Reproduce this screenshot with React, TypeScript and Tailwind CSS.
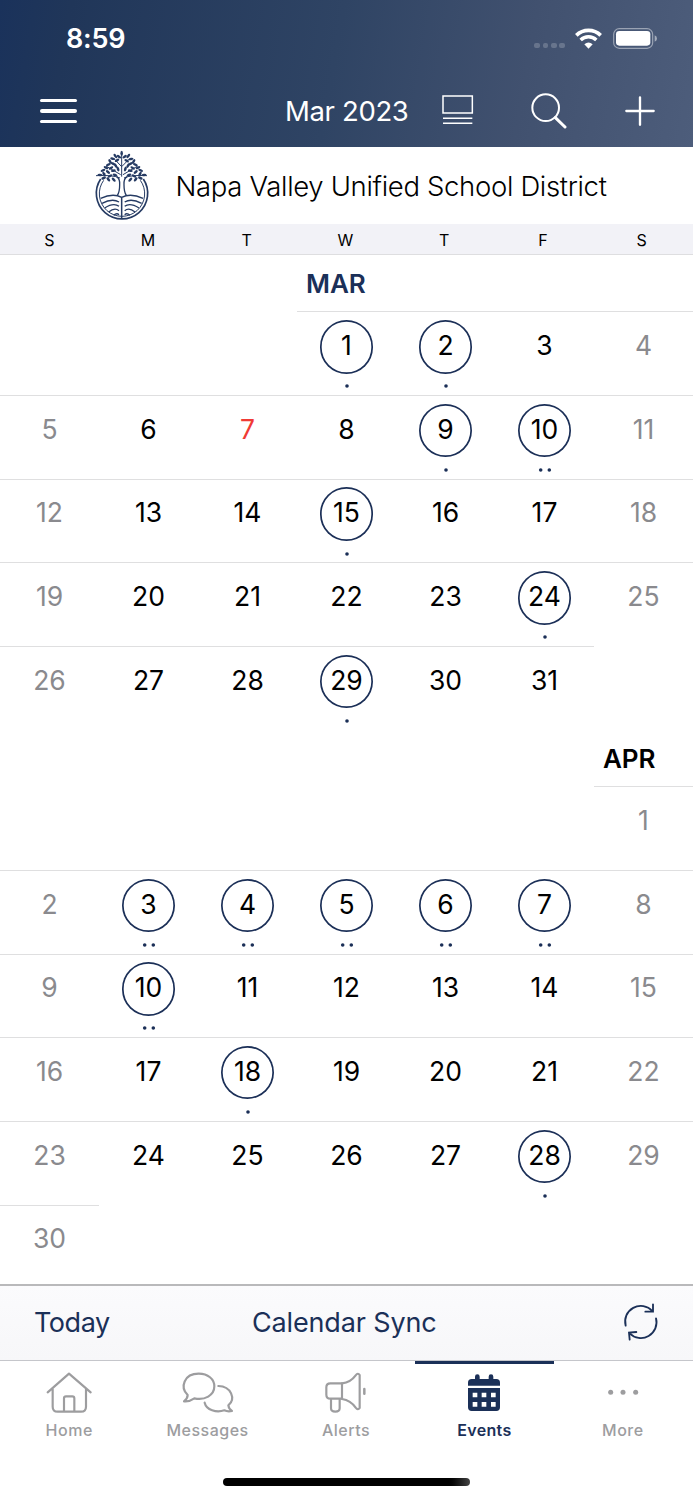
import type { ReactNode } from "react";
import { clsx } from "clsx";

const WEEKDAYS = ["S", "M", "T", "W", "T", "F", "S"];

interface Month {
  label: string;
  current?: boolean;
  startCol: number;
  days: number;
  today?: number;
  events: Record<number, number>;
}

const MONTHS: Month[] = [
  {
    label: "MAR",
    current: true,
    startCol: 3,
    days: 31,
    today: 7,
    events: { 1: 1, 2: 1, 9: 1, 10: 2, 15: 1, 24: 1, 29: 1 },
  },
  {
    label: "APR",
    startCol: 6,
    days: 30,
    events: { 3: 2, 4: 2, 5: 2, 6: 2, 7: 2, 10: 2, 18: 1, 28: 1 },
  },
];

function getWeeks({ startCol, days }: Month) {
  const rows = Math.ceil((startCol + days) / 7);
  return Array.from({ length: rows }, (_, r) =>
    Array.from({ length: 7 }, (_, c) => {
      const day = r * 7 + c - startCol + 1;
      return day >= 1 && day <= days ? day : null;
    })
  );
}

function StatusBar() {
  return (
    <div className="flex h-[75px] items-center pt-[2px] pl-[66px] pr-[35px]">
      <span className="text-[27px] leading-none font-semibold tracking-[-0.2px]">8:59</span>
      <div className="ml-auto flex items-center">
        <div className="mt-[14px] mr-[10px] flex gap-[2.8px]">
          {[0, 1, 2, 3].map((i) => (
            <span key={i} className="h-[5.6px] w-[5.6px] rounded-[2px] bg-white/20" />
          ))}
        </div>
        <svg className="mr-[11px] h-[21px] w-[27px]" viewBox="0 0 81 63" fill="none" stroke="white">
          <path d="M4 22 A52 52 0 0 1 77 22" strokeWidth="11" />
          <path d="M17 36 A34 34 0 0 1 64 36" strokeWidth="10.5" />
          <path d="M40.5 62 L28 49 Q40.5 38 53 49 Z" fill="white" stroke="none" />
        </svg>
        <svg className="h-[21px] w-[45px]" viewBox="0 0 135 63">
          <rect x="2" y="2" width="117" height="59" rx="17" fill="none" stroke="white" strokeOpacity="0.45" strokeWidth="3.5" />
          <rect x="9" y="9" width="103" height="44" rx="10" fill="white" />
          <path d="M125 22 Q132 25 132 32 Q132 38 125 41 Z" fill="white" fillOpacity="0.5" />
        </svg>
      </div>
    </div>
  );
}

function NavBar() {
  return (
    <div className="flex h-[72px] items-center pl-10">
      <div className="flex w-[37px] flex-col gap-[6.8px]">
        <span className="h-[3.6px] rounded-full bg-white" />
        <span className="h-[3.6px] rounded-full bg-white" />
        <span className="h-[3.6px] rounded-full bg-white" />
      </div>
      <span className="ml-[208px] w-[123px] pt-[2px] text-[27.5px] leading-none tracking-[-0.35px] whitespace-nowrap">Mar 2023</span>
      <svg className="mt-[-2px] ml-[33px] h-[32px] w-[33px]" viewBox="0 0 99 96" fill="none" stroke="white" strokeWidth="4.5">
        <path d="M6 6 H94 V57 H6 Z M6 73 H94 M6 88 H94" />
      </svg>
      <svg className="ml-[57px] h-[36px] w-[36px]" viewBox="0 0 108 108" fill="none" stroke="white" strokeLinecap="round">
        <circle cx="44" cy="44" r="40" strokeWidth="6" />
        <path d="M73 74 L102 102" strokeWidth="9" />
      </svg>
      <svg className="ml-[58px] h-[30px] w-[30px]" viewBox="0 0 90 90" fill="none" stroke="white" strokeWidth="7" strokeLinecap="round">
        <path d="M45 4 V86 M4 45 H86" />
      </svg>
    </div>
  );
}

const LEAVES = [
  [127, 26, 90], [119, 36, 35], [136, 36, -35], [108, 34, 50], [147, 34, -50],
  [100, 42, 10], [155, 43, -10], [113, 47, -30], [142, 48, 30], [92, 50, 60],
  [163, 50, -60], [87, 60, -20], [168, 60, 20], [101, 57, 30], [154, 57, -30],
  [80, 69, 25], [176, 69, -25], [95, 70, -35], [160, 70, 35], [109, 63, 60],
  [146, 63, -60], [71, 77, -20], [184, 77, 20], [86, 82, 40], [169, 82, -40],
  [102, 78, -10], [153, 78, 10], [62, 91, 5], [194, 91, -5], [74, 88, 60],
  [182, 88, -60], [73, 100, -25], [183, 100, 25], [92, 94, -30], [164, 94, 30],
  [87, 104, 50], [169, 104, -50], [107, 91, 20], [149, 91, -20], [103, 105, 45],
  [153, 105, -45], [116, 73, 70], [138, 73, -70],
];

function DistrictLogo() {
  return (
    <svg className="h-[72px] w-[56px] shrink-0 text-[#263b63]" viewBox="44 16 168 216" fill="none" stroke="currentColor">
      <path d="M64 103 A77 77 0 1 0 192 103" strokeWidth="5" />
      <path d="M73 107 A68 68 0 1 0 183 107" strokeWidth="3" />
      <path d="M127 24 V96 M124 90 L80 64 M131 90 L175 64 M122 100 Q100 90 50 93 M134 100 Q155 90 203 93 M127 66 L104 42 M127 66 L151 42" strokeWidth="3" />
      <path d="M112 96 Q122 102 121 120 Q121 142 114 152 M143 96 Q133 102 134 120 Q134 142 141 152" strokeWidth="4" />
      <path d="M64 161 Q101 144 127 158 Q154 144 191 161 M127 158 V220" strokeWidth="4.5" />
      <path d="M68 176 Q99 160 119 172 M76 190 Q103 173 119 185 M88 202 Q106 187 119 198 M103 212 Q112 204 119 210 M187 176 Q156 160 136 172 M179 190 Q152 173 136 185 M167 202 Q149 187 136 198 M152 212 Q143 204 136 210" strokeWidth="4" />
      {LEAVES.map(([x, y, angle]) => (
        <ellipse
          key={`${x}-${y}`}
          cx={x}
          cy={y}
          rx="7.5"
          ry="3.8"
          transform={`rotate(${angle} ${x} ${y})`}
          fill="currentColor"
          stroke="none"
        />
      ))}
    </svg>
  );
}

function EventDots({ count }: { count: number }) {
  return (
    <svg className="mt-[10.6px] h-[4px] w-[14px] text-[#1b2f57]" viewBox="0 0 14 4" fill="currentColor">
      {count === 1 && <circle cx="7" cy="2" r="1.8" />}
      {count === 2 && (
        <>
          <circle cx="2.7" cy="2" r="1.8" />
          <circle cx="11.3" cy="2" r="1.8" />
        </>
      )}
    </svg>
  );
}

interface DayCellProps {
  day: number | null;
  col: number;
  today: boolean;
  events: number;
}

function DayCell({ day, col, today, events }: DayCellProps) {
  if (day === null) return <div />;
  const weekend = col === 0 || col === 6;
  return (
    <div className="flex flex-col items-center border-t border-[#dfdfe0] pt-[7.6px]">
      <div
        className={clsx(
          "flex h-[53.6px] w-[53.6px] items-center justify-center rounded-full pb-[3px] text-[26.5px] leading-none",
          events > 0 && "shadow-[inset_0_0_0_1.7px_#1b2f57]",
          today ? "text-[#f03a35]" : weekend ? "text-[#8a8a8e]" : "text-black"
        )}
      >
        {day}
      </div>
      <EventDots count={events} />
    </div>
  );
}

function MonthSection({ month }: { month: Month }) {
  return (
    <section>
      <div className="grid h-[56.4px] grid-cols-7 items-center pt-[2px]">
        {WEEKDAYS.map((_, col) => (
          <span
            key={col}
            className={clsx(
              "pl-[9px] text-[26px] leading-none font-semibold tracking-[-0.1px]",
              month.current ? "text-[#1b3058]" : "text-black"
            )}
          >
            {col === month.startCol ? month.label : ""}
          </span>
        ))}
      </div>
      {getWeeks(month).map((week, r) => (
        <div key={r} className="grid h-[83.7px] grid-cols-7">
          {week.map((day, col) => (
            <DayCell
              key={col}
              day={day}
              col={col}
              today={day !== null && day === month.today}
              events={day !== null ? month.events[day] ?? 0 : 0}
            />
          ))}
        </div>
      ))}
    </section>
  );
}

function Toolbar() {
  return (
    <div className="flex h-[77px] shrink-0 items-center border-t-2 border-b border-t-[#b9b9bb] border-b-[#c5c6cb] bg-linear-to-b from-[#fbfbfd] to-[#f7f7f9] pl-[34px] text-[27px] leading-none text-[#1b3058]">
      <span className="w-[218px] pb-px tracking-[-0.45px]">Today</span>
      <span className="w-[190px] pb-px tracking-[-0.15px] whitespace-nowrap">Calendar Sync</span>
      <svg className="mt-[-2px] ml-[181px] h-[38px] w-[36px]" viewBox="840 338 108 114" fill="none" stroke="currentColor" strokeWidth="5.5" strokeLinecap="round">
        <path d="M848 406 A47 47 0 0 1 928 362 M930 342 V364 H907" />
        <path d="M939 384 A47 47 0 0 1 860 429 M860 448 L858 427 L880 425" />
      </svg>
    </div>
  );
}

interface TabProps {
  label: string;
  active?: boolean;
  children: ReactNode;
}

function Tab({ label, active, children }: TabProps) {
  return (
    <div
      className={clsx(
        "flex flex-1 flex-col items-center border-t-[3px] pt-[6px]",
        active ? "border-[#1b3058] text-[#1b3058]" : "border-transparent text-[#9d9d9f]"
      )}
    >
      {children}
      <span className={clsx("mt-[6px] text-[16px] leading-[18px]", active ? "font-semibold tracking-[0.3px]" : "font-medium tracking-[0.5px]")}>
        {label}
      </span>
    </div>
  );
}

function TabBar() {
  return (
    <nav className="flex h-[112px] shrink-0 bg-white pr-px">
      <Tab label="Home">
        <svg className="h-[45px] w-[48px]" viewBox="135 540 144 135" fill="none" stroke="currentColor" strokeWidth="6.5" strokeLinecap="round" strokeLinejoin="round">
          <path d="M143 607 L207 551 L272 607 M158 598 V650 Q158 665 173 665 H243 Q258 665 258 650 V598 M192 664 V625 Q192 619 198 619 H217 Q223 619 223 625 V664" />
        </svg>
      </Tab>
      <Tab label="Messages">
        <svg className="h-[45px] w-[56px]" viewBox="541 540 168 135" fill="none" stroke="currentColor" strokeWidth="6.5" strokeLinecap="round" strokeLinejoin="round">
          <path d="M564 615 C540 592 553 551 597 551 C625 551 644 567 644 589 C644 616 615 632 584 625 Q568 636 553 634 Q564 625 564 615 Z" />
          <path d="M656 588 C695 589 709 627 686 646 Q688 658 697 663 Q684 666 674 661 C650 669 620 660 615 638" />
        </svg>
      </Tab>
      <Tab label="Alerts">
        <svg className="h-[45px] w-[48px]" viewBox="966 540 144 135" fill="none" stroke="currentColor" strokeWidth="6.5" strokeLinecap="round" strokeLinejoin="round">
          <path d="M1026 580 H991 Q979 580 979 592 V614 Q979 626 991 626 H1026 Z M993 627 V655 Q993 665 1006 665 Q1019 665 1019 655 V627" />
          <path d="M1026 580 Q1052 577 1067 556 Q1074 547 1079 555 V654 Q1074 662 1067 653 Q1052 631 1026 627" />
          <path d="M1093 597 V611" strokeWidth="7.5" />
        </svg>
      </Tab>
      <Tab label="Events" active>
        <svg className="h-[45px] w-[48px]" viewBox="351 540 144 135" fill="currentColor">
          <path d="M375 587 V578 Q375 567 386 567 H396 V560 Q396 553 403 553 Q410 553 410 560 V567 H437 V560 Q437 553 444 553 Q451 553 451 560 V567 H460 Q471 567 471 578 V587 Z" />
          <path fillRule="evenodd" d="M375 594 H471 V652 Q471 663 460 663 H386 Q375 663 375 652 Z M389 608 V622 H403 V608 Z M416 608 V622 H430 V608 Z M444 608 V622 H458 V608 Z M389 636 V650 H403 V636 Z M416 636 V650 H430 V636 Z M444 636 V650 H458 V636 Z" />
        </svg>
      </Tab>
      <Tab label="More">
        <svg className="h-[45px] w-[48px]" viewBox="767 540 144 135" fill="currentColor">
          <circle cx="802" cy="607" r="7.5" />
          <circle cx="839" cy="607" r="7.5" />
          <circle cx="877" cy="607" r="7.5" />
        </svg>
      </Tab>
    </nav>
  );
}

export default function App() {
  return (
    <div className="flex h-[1500px] w-[693px] flex-col overflow-hidden bg-white font-['Inter',sans-serif]">
      <header className="h-[147px] shrink-0 bg-linear-[100deg,#1a325b_0%,#203659_10%,#2f4464_48%,#41516f_75%,#4d5d7b_100%] text-white">
        <StatusBar />
        <NavBar />
      </header>

      <div className="flex h-[77px] shrink-0 items-center pl-[94px]">
        <DistrictLogo />
        <h1 className="ml-[25.5px] pt-[3px] text-[27.5px] leading-none font-light tracking-[-0.33px] whitespace-nowrap text-black">
          Napa Valley Unified School District
        </h1>
      </div>

      <div className="grid h-[31px] shrink-0 grid-cols-7 items-center border-b border-[#dedee0] bg-[#f2f2f7] pt-px pr-[2px] text-center text-[16px] leading-none text-black">
        {WEEKDAYS.map((d, i) => (
          <span key={i}>{d}</span>
        ))}
      </div>

      <main className="min-h-0 flex-1 overflow-hidden">
        {MONTHS.map((month) => (
          <MonthSection key={month.label} month={month} />
        ))}
      </main>

      <Toolbar />
      <TabBar />
      <div className="flex h-[27px] shrink-0 justify-center pt-[5px]">
        <div className="h-[8px] w-[247px] rounded-full bg-linear-to-r from-black from-90% to-[#444]" />
      </div>
    </div>
  );
}
